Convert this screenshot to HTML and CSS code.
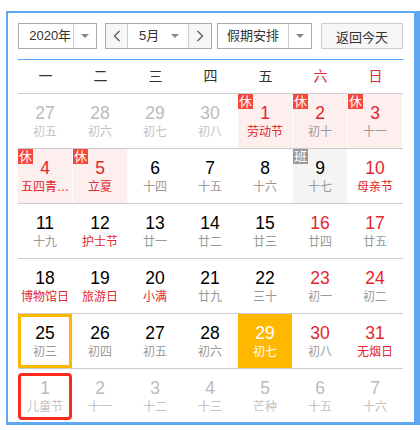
FILE: index.html
```html
<!DOCTYPE html>
<html lang="zh-CN">
<head>
<meta charset="utf-8">
<title>日历</title>
<link rel="stylesheet" href="styles.css">
</head>
<body>
<div class="frame">
  <div class="toolbar">
    <div class="select year"><span class="val">2020年</span><span class="drop"><i class="tri"></i></span></div>
    <div class="month-group">
      <span class="nav prev"><svg width="8" height="12" viewBox="0 0 8 12"><path d="M6.5 1 L1.5 6 L6.5 11" fill="none" stroke="#555" stroke-width="1.2"/></svg></span>
      <div class="month"><span class="mval">5月</span><i class="tri"></i></div>
      <span class="nav next"><svg width="8" height="12" viewBox="0 0 8 12"><path d="M1.5 1 L6.5 6 L1.5 11" fill="none" stroke="#555" stroke-width="1.2"/></svg></span>
    </div>
    <div class="select holiday"><span class="val">假期安排</span><span class="drop"><i class="tri"></i></span></div>
    <button class="today-btn">返回今天</button>
  </div>
  <div class="weekdays">
    <span>一</span><span>二</span><span>三</span><span>四</span><span>五</span><span class="wk">六</span><span class="wk">日</span>
  </div>
  <div class="week">
    <div class="c other"><b>27</b><em>初五</em></div>
    <div class="c other"><b>28</b><em>初六</em></div>
    <div class="c other"><b>29</b><em>初七</em></div>
    <div class="c other"><b>30</b><em>初八</em></div>
    <div class="c rest red fest"><span class="badge">休</span><b>1</b><em>劳动节</em></div>
    <div class="c rest red"><span class="badge">休</span><b>2</b><em>初十</em></div>
    <div class="c rest red"><span class="badge">休</span><b>3</b><em>十一</em></div>
  </div>
  <div class="week">
    <div class="c rest red fest"><span class="badge">休</span><b>4</b><em>五四青…</em></div>
    <div class="c rest red fest"><span class="badge">休</span><b>5</b><em>立夏</em></div>
    <div class="c"><b>6</b><em>十四</em></div>
    <div class="c"><b>7</b><em>十五</em></div>
    <div class="c"><b>8</b><em>十六</em></div>
    <div class="c work"><span class="badge grey">班</span><b>9</b><em>十七</em></div>
    <div class="c red fest"><b>10</b><em>母亲节</em></div>
  </div>
  <div class="week">
    <div class="c"><b>11</b><em>十九</em></div>
    <div class="c fest"><b>12</b><em>护士节</em></div>
    <div class="c"><b>13</b><em>廿一</em></div>
    <div class="c"><b>14</b><em>廿二</em></div>
    <div class="c"><b>15</b><em>廿三</em></div>
    <div class="c red"><b>16</b><em>廿四</em></div>
    <div class="c red"><b>17</b><em>廿五</em></div>
  </div>
  <div class="week">
    <div class="c fest"><b>18</b><em>博物馆日</em></div>
    <div class="c fest"><b>19</b><em>旅游日</em></div>
    <div class="c fest"><b>20</b><em>小满</em></div>
    <div class="c"><b>21</b><em>廿九</em></div>
    <div class="c"><b>22</b><em>三十</em></div>
    <div class="c red"><b>23</b><em>初一</em></div>
    <div class="c red"><b>24</b><em>初二</em></div>
  </div>
  <div class="week">
    <div class="c today"><b>25</b><em>初三</em></div>
    <div class="c"><b>26</b><em>初四</em></div>
    <div class="c"><b>27</b><em>初五</em></div>
    <div class="c"><b>28</b><em>初六</em></div>
    <div class="c sel"><b>29</b><em>初七</em></div>
    <div class="c red"><b>30</b><em>初八</em></div>
    <div class="c red fest"><b>31</b><em>无烟日</em></div>
  </div>
  <div class="week">
    <div class="c other"><span class="focus"></span><b>1</b><em>儿童节</em></div>
    <div class="c other"><b>2</b><em>十一</em></div>
    <div class="c other"><b>3</b><em>十二</em></div>
    <div class="c other"><b>4</b><em>十三</em></div>
    <div class="c other"><b>5</b><em>芒种</em></div>
    <div class="c other"><b>6</b><em>十五</em></div>
    <div class="c other"><b>7</b><em>十六</em></div>
  </div>
</div>
</body>
</html>
```
FILE: styles.css
```css
* { box-sizing: border-box; }
body {
  margin: 0;
  background: #fff;
  font-family: "Liberation Sans", "Noto Sans CJK SC", sans-serif;
  color: #333;
}
.frame {
  margin: 11px 0 0 6px;
  width: 414px;
  height: 414px;
  border: 2px solid #5ea8f5;
  border-right-width: 6px;
  border-bottom-width: 3px;
  padding: 10px 11px 0 10px;
  overflow: hidden;
}
.toolbar {
  display: flex;
  align-items: flex-start;
  height: 37px;
  border-bottom: 1px solid #5ea8f5;
  font-size: 13px;
}
.select, .month-group {
  display: flex;
  height: 26px;
  border: 1px solid #aaa;
  background: #fff;
  line-height: 24px;
}
.year { width: 79px; }
.year .val { width: 55px; padding-left: 8px; text-align: center; }
.holiday { width: 95px; margin-left: 5px; }
.holiday .val { width: 70px; text-align: center; }
.drop {
  width: 23px;
  border-left: 1px solid #ccc;
  display: flex;
  align-items: center;
  justify-content: center;
}
.tri {
  display: block;
  width: 0;
  height: 0;
  border-left: 4px solid transparent;
  border-right: 4px solid transparent;
  border-top: 4px solid #888;
}
.month-group { width: 107px; margin-left: 8px; }
.nav {
  display: flex;
  align-items: center;
  justify-content: center;
  background: #f6f6f6;
}
.prev { width: 22px; border-right: 1px solid #ccc; }
.next { width: 23px; border-left: 1px solid #ccc; }
.month {
  width: 60px;
  display: flex;
  align-items: center;
}
.mval { margin-left: 11px; width: 22px; }
.month .tri { margin-left: 10px; }
.today-btn {
  margin-left: 9px;
  width: 82px;
  height: 26px;
  border: 1px solid #ccc;
  background: #f6f6f6;
  color: #333;
  font: 13px "Liberation Sans", "Noto Sans CJK SC", sans-serif;
  padding: 0;
}
.weekdays {
  display: grid;
  grid-template-columns: repeat(7, 55px);
  height: 34px;
  border-bottom: 1px solid #ccc;
  font-size: 14px;
  line-height: 33px;
  text-align: center;
  color: #333;
}
.weekdays .wk { color: #e3262d; }
.week {
  display: grid;
  grid-template-columns: repeat(7, 55px);
  height: 55px;
  border-bottom: 1px solid #ccc;
}
.c {
  position: relative;
  height: 54px;
  border-right: 1px solid #fff;
  padding-top: 9px;
  text-align: center;
}
.c b {
  display: block;
  font-weight: normal;
  font-size: 17.5px;
  line-height: 20px;
  color: #000;
}
.c em {
  display: block;
  font-style: normal;
  font-size: 12px;
  line-height: 16px;
  margin-top: 1px;
  color: #999;
  white-space: nowrap;
}
.c.red b { color: #e3262d; }
.c.fest em { color: #e3262d; }
.c.other b { color: #bbb; }
.c.other em { color: #c2c2c2; }
.c.rest { background: #fdefee; }
.c.work { background: #f4f4f4; }
.badge {
  position: absolute;
  left: 0;
  top: 0;
  width: 15px;
  height: 15px;
  background: #f5473c;
  color: #fff;
  font-size: 13px;
  line-height: 15px;
  text-align: center;
}
.badge.grey { background: #9a9a9a; }
.c.today { box-shadow: inset 0 0 0 3px #ffb800; }
.c.sel { background: #ffb800; }
.c.sel b, .c.sel em { color: #fff; }
.focus {
  position: absolute;
  left: 0;
  top: 4px;
  width: 54px;
  height: 47px;
  border: 3px solid #fa2a1e;
  border-radius: 4px;
}
```
